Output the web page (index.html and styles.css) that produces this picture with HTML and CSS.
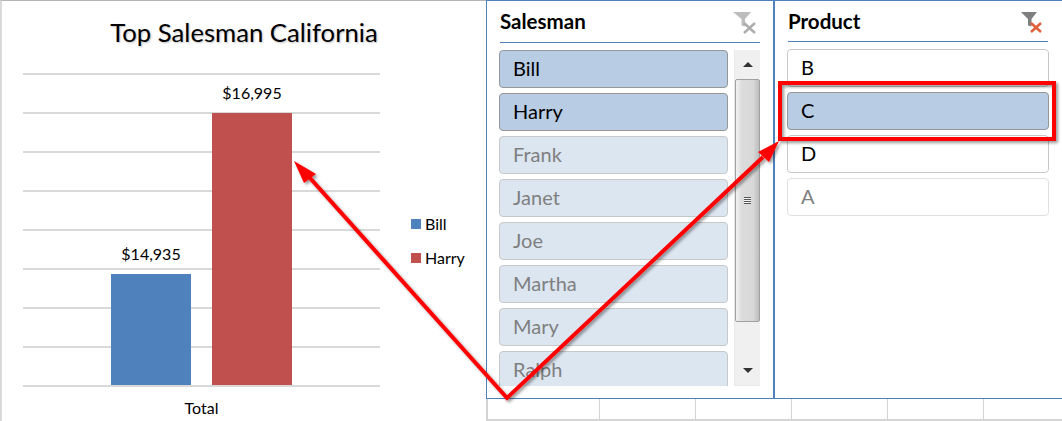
FILE: index.html
```html
<!DOCTYPE html>
<html lang="en">
  <head>
    <meta charset="UTF-8" />
    <meta name="viewport" content="width=device-width, initial-scale=1.0" />
    <title>Top Salesman California</title>
    <link rel="stylesheet" href="styles.css">
  </head>
  <body>
    <div id="container">
      <div class="chart">
        <h1>Top Salesman California</h1>
        <div class="chart-row">
          <div class="plot">
            <div class="bar-col">
              <span class="bar-label">$14,935</span>
              <div class="bar bar-bill"></div>
            </div>
            <div class="bar-col">
              <span class="bar-label">$16,995</span>
              <div class="bar bar-harry"></div>
            </div>
          </div>
          <ul class="legend">
            <li><i class="swatch swatch-bill"></i>Bill</li>
            <li><i class="swatch swatch-harry"></i>Harry</li>
          </ul>
        </div>
        <p class="axis-label">Total</p>
      </div>

      <div class="sheet">
        <div class="slicers">
          <section class="slicer slicer-salesman">
            <header class="slicer-head">
              <h2>Salesman</h2>
              <svg class="filter-icon" width="24" height="24" viewBox="0 0 24 24">
                <path d="M0 1H18L12 8V15.500L8.500 14.500V8Z" fill="#bdbdbd" />
                <path d="M11 12L22 22M22 12L11 22" stroke="#adadad" stroke-width="2.500" fill="none" />
              </svg>
            </header>
            <div class="slicer-body">
              <div class="items">
                <div class="item on">Bill</div>
                <div class="item on">Harry</div>
                <div class="item off">Frank</div>
                <div class="item off">Janet</div>
                <div class="item off">Joe</div>
                <div class="item off">Martha</div>
                <div class="item off">Mary</div>
                <div class="item off">Ralph</div>
              </div>
              <div class="scrollbar">
                <div class="scroll-btn"><i class="tri-up"></i></div>
                <div class="scroll-thumb"><i class="grip"></i></div>
                <div class="scroll-rest"></div>
                <div class="scroll-btn"><i class="tri-down"></i></div>
              </div>
            </div>
          </section>

          <section class="slicer slicer-product">
            <header class="slicer-head">
              <h2>Product</h2>
              <svg class="filter-icon" width="22" height="24" viewBox="0 0 22 24">
                <path d="M0 1H16L10.500 8V15.500L7 14.500V8Z" fill="#7f7f7f" />
                <path d="M10 12L20 21M20 12L10 21" stroke="#e0603c" stroke-width="2.500" fill="none" />
              </svg>
            </header>
            <div class="items">
              <div class="item plain">B</div>
              <div class="item on">C</div>
              <div class="item plain">D</div>
              <div class="item empty">A</div>
            </div>
          </section>
        </div>
        <div class="cells">
          <span class="cell cell-first"></span>
          <span class="cell"></span>
          <span class="cell"></span>
          <span class="cell"></span>
          <span class="cell"></span>
          <span class="cell"></span>
        </div>
      </div>

      <!-- red callout drawn over the screenshot -->
      <svg class="callout" width="1062" height="421" viewBox="0 0 1062 421">
        <defs>
          <filter id="soft" x="-5%" y="-5%" width="110%" height="110%">
            <feDropShadow dx="2" dy="2" stdDeviation="1.500" flood-color="#000" flood-opacity="0.4" />
          </filter>
        </defs>
        <g filter="url(#soft)">
          <rect x="780" y="83" width="274" height="56" fill="none" stroke="#f00" stroke-width="4" />
          <path d="M310 178L507 398L763 157" fill="none" stroke="#f00" stroke-width="4" />
          <path d="M294 161L316 174L304 183Z" fill="#f00" />
          <path d="M779 141L758 152L769 162Z" fill="#f00" />
        </g>
      </svg>
    </div>
  </body>
</html>
```
FILE: styles.css
```css
* {
  box-sizing: border-box;
  margin: 0;
  padding: 0;
}
body {
  font-family: Lato, "Open Sans", sans-serif;
  background-color: #fff;
  color: #000;
}
#container {
  position: relative;
  display: flex;
  width: 1062px;
  height: 421px;
  overflow: hidden;
}

/* chart */
.chart {
  width: 486px;
  height: 421px;
  border-top: 1px solid #b5b5b5;
  border-left: 2px solid #d9d9d9;
  padding-top: 16px;
}
.chart h1 {
  font-size: 25.7px;
  font-weight: 400;
  line-height: 30px;
  text-align: center;
  text-shadow: 1px 1px 2px rgba(0, 0, 0, 0.25);
}
.chart-row {
  display: flex;
  margin-top: 26px;
  padding-left: 21px;
}
.plot {
  display: flex;
  justify-content: center;
  align-items: flex-end;
  gap: 21px;
  width: 357px;
  height: 314px;
  padding-bottom: 2px;
  background: repeating-linear-gradient(#d9d9d9 0, #d9d9d9 2px, transparent 2px, transparent 39px);
}
.bar-col {
  display: flex;
  flex-direction: column;
  align-items: center;
}
.bar-label {
  font-size: 16px;
  line-height: 20px;
  margin-bottom: 10px;
  background-color: #fff;
}
.bar {
  width: 80px;
}
.bar-bill {
  height: 111px;
  background-color: #4f81bd;
}
.bar-harry {
  height: 272px;
  background-color: #c0504d;
}
.legend {
  list-style: none;
  margin: 140px 0 0 31px;
  font-size: 16px;
}
.legend li {
  display: flex;
  align-items: center;
  height: 20px;
  margin-bottom: 14px;
}
.swatch {
  width: 10px;
  height: 10px;
  margin: 2px 4px 0 0;
}
.swatch-bill {
  background-color: #4f81bd;
}
.swatch-harry {
  background-color: #c0504d;
}
.axis-label {
  width: 357px;
  margin: 11px 0 0 21px;
  font-size: 16px;
  line-height: 20px;
  text-align: center;
}

/* slicers */
.sheet {
  width: 576px;
}
.slicers {
  display: flex;
  height: 399px;
}
.slicer {
  width: 288px;
  height: 399px;
  border: 1px solid #4f81bd;
}
.slicer-salesman {
  padding: 0 13px 0 12px;
}
.slicer-product {
  padding: 0 13px 0 12px;
  border-right: none;
}
.slicer-head {
  display: flex;
  justify-content: space-between;
  align-items: flex-start;
  height: 41px;
  margin-left: 1px;
  padding-top: 10px;
  border-bottom: 1px solid #4f81bd;
}
.slicer-head h2 {
  margin-top: -1px;
  font-size: 20.5px;
  font-weight: 700;
  line-height: 22px;
}
.slicer-salesman .slicer-head {
  height: 42px;
  padding-right: 3px;
}
.slicer-product .slicer-head {
  margin-right: 1px;
  padding-right: 5px;
}
.slicer-body {
  display: flex;
  justify-content: space-between;
  height: 344px;
  margin-top: 7px;
  overflow: hidden;
}
.slicer-salesman .items {
  width: 229px;
  height: 336px;
  overflow: hidden;
}
.slicer-product .items {
  margin-top: 7px;
}
.item {
  height: 38px;
  margin-bottom: 5px;
  padding-left: 13px;
  border: 1px solid #c8c8c8;
  border-radius: 4px;
  font-size: 20px;
  line-height: 35px;
}
.item.on {
  background-color: #b8cce4;
  border-color: #969696;
}
.item.off {
  background-color: #dce6f1;
  color: #7f7f7f;
}
.item.plain {
  background-color: #fff;
}
.item.empty {
  background-color: #fff;
  border-color: #e0e0e0;
  color: #7f7f7f;
}

/* scrollbar */
.scrollbar {
  display: flex;
  flex-direction: column;
  width: 27px;
  height: 336px;
  margin-right: -1px;
  background-color: #f0f0f0;
  border: 1px solid #e8e8e8;
  border-top: none;
}
.scroll-btn {
  display: flex;
  justify-content: center;
  align-items: center;
  height: 29px;
}
.tri-up,
.tri-down {
  width: 0;
  height: 0;
  border-left: 5px solid transparent;
  border-right: 5px solid transparent;
}
.tri-up {
  border-bottom: 5px solid #333;
}
.tri-down {
  border-top: 5px solid #333;
}
.scroll-thumb {
  display: flex;
  justify-content: center;
  align-items: center;
  height: 243px;
  background: linear-gradient(90deg, #f2f2f2 0, #dcdcdc 25%, #d8d8d8 75%, #bdbdbd 100%);
  border: 1px solid #a0a0a0;
  border-radius: 2px;
}
.scroll-rest {
  flex: 1;
}
.grip {
  width: 7px;
  height: 7px;
  background: repeating-linear-gradient(#555 0, #555 1px, #f5f5f5 1px, #f5f5f5 2px);
}

/* worksheet cells under the slicers */
.cells {
  display: flex;
  height: 22px;
  border-bottom: 2px solid #d4d4d4;
  overflow: hidden;
}
.cell {
  flex: none;
  width: 96px;
  border-left: 1px solid #d4d4d4;
}
.cell-first {
  width: 113px;
  border-left-width: 2px;
}

.callout {
  position: absolute;
  top: 0;
  left: 0;
  pointer-events: none;
}
```
